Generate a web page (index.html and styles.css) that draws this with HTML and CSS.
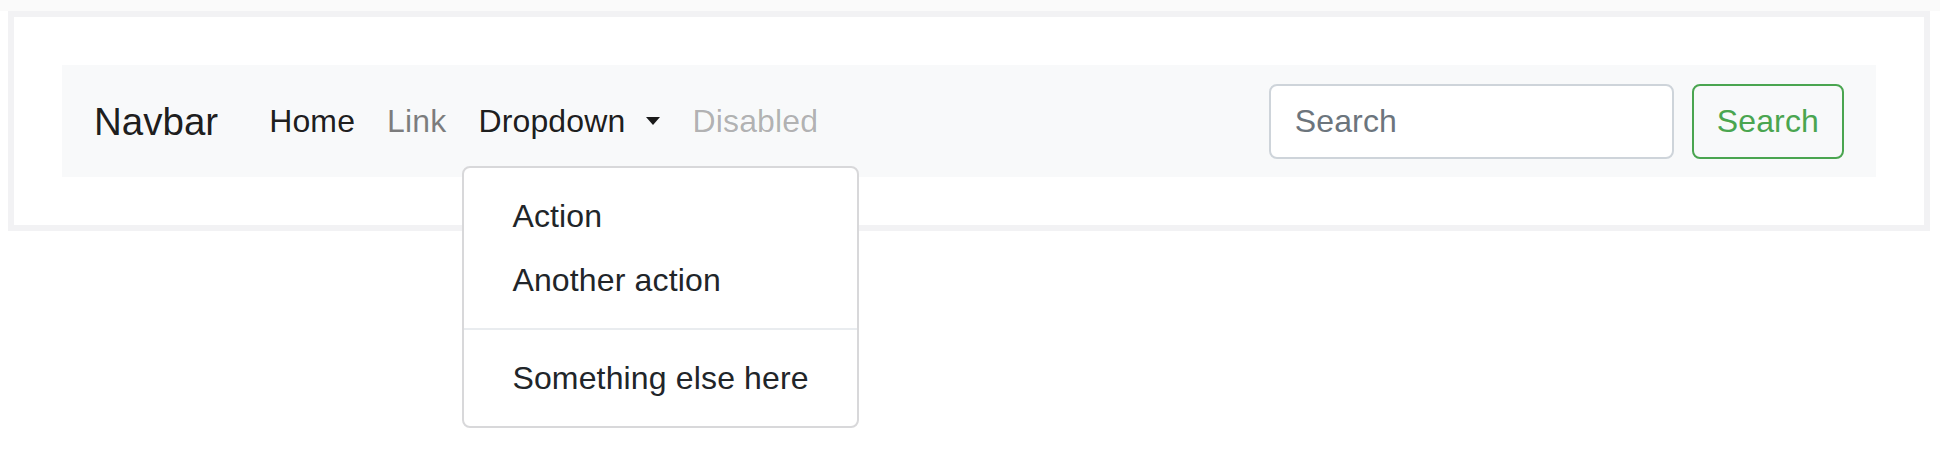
FILE: index.html
```html
<!DOCTYPE html>
<html lang="en">
<head>
<meta charset="utf-8">
<title>Navbar</title>
<link rel="stylesheet" href="styles.css">
</head>
<body>
<div class="topband"></div>
<div class="frame">
  <nav class="navbar">
    <a class="brand" href="#">Navbar</a>
    <ul class="nav">
      <li class="nav-item"><a class="nav-link active" href="#">Home</a></li>
      <li class="nav-item"><a class="nav-link" href="#">Link</a></li>
      <li class="nav-item dropdown">
        <a class="nav-link active" href="#">Dropdown<span class="caret"></span></a>
        <div class="menu">
          <a class="menu-item" href="#">Action</a>
          <a class="menu-item" href="#">Another action</a>
          <div class="divider"></div>
          <a class="menu-item" href="#">Something else here</a>
        </div>
      </li>
      <li class="nav-item"><a class="nav-link disabled" href="#">Disabled</a></li>
    </ul>
    <form class="search">
      <input class="search-input" type="text" placeholder="Search">
      <button class="search-btn" type="button">Search</button>
    </form>
  </nav>
</div>
</body>
</html>
```
FILE: styles.css
```css
* { box-sizing: border-box; }
html, body { margin: 0; padding: 0; background: #ffffff; min-height: 466px; }
body {
  font-family: "Liberation Sans", Arial, sans-serif;
  font-size: 32px;
  line-height: 48px;
  letter-spacing: 0.15px;
  color: #212529;
}
a { text-decoration: none; }

.topband { height: 11px; background: #fafafa; }

.frame {
  margin: 0 10px 0 8px;
  border: 6px solid #f2f2f4;
  padding: 48px;
  background: #ffffff;
}

.navbar {
  display: flex;
  align-items: center;
  height: 112px;
  padding: 0 32px;
  background: #f8f9fa;
}

.brand {
  font-size: 38.5px;
  line-height: 56px;
  letter-spacing: 0;
  color: rgba(0, 0, 0, 0.9);
  margin-right: 35px;
  margin-top: 2px;
}

.nav {
  display: flex;
  list-style: none;
  margin: 0;
  padding: 0;
}
.nav-item { position: relative; }
.nav-link {
  display: block;
  padding: 8px 16px;
  color: rgba(0, 0, 0, 0.5);
  white-space: nowrap;
}
.nav-link.active { color: rgba(0, 0, 0, 0.9); }
.nav-link.disabled { color: rgba(0, 0, 0, 0.3); }

.caret {
  display: inline-block;
  width: 0;
  height: 0;
  margin-left: 21px;
  vertical-align: 7px;
  border-top: 8px solid #1a1a1a;
  border-left: 7px solid transparent;
  border-right: 7px solid transparent;
}

.menu {
  position: absolute;
  left: 0;
  top: calc(100% + 13px);
  z-index: 10;
  padding: 16px 0;
  background: #ffffff;
  border: 2px solid #d8d8da;
  border-radius: 8px;
  white-space: nowrap;
}
.menu-item {
  display: block;
  padding: 8px 48px;
  color: #212529;
}
.divider {
  height: 0;
  margin: 16px 0;
  border-top: 2px solid #e9ecef;
}

.search {
  display: flex;
  align-items: center;
  margin: 0 0 0 auto;
}
.search-input {
  width: 405px;
  height: 75px;
  margin: 0 18px 0 0;
  padding: 0 24px;
  font-family: inherit;
  font-size: 32px;
  letter-spacing: 0.15px;
  color: #495057;
  background: #ffffff;
  border: 2px solid #ced4da;
  border-radius: 8px;
  outline: none;
}
.search-input::placeholder { color: #6c757d; opacity: 1; }
.search-btn {
  height: 75px;
  padding: 0 23px;
  font-family: inherit;
  font-size: 32px;
  letter-spacing: 0.15px;
  color: #4aa550;
  background: transparent;
  border: 2px solid #4aa550;
  border-radius: 8px;
}
```
